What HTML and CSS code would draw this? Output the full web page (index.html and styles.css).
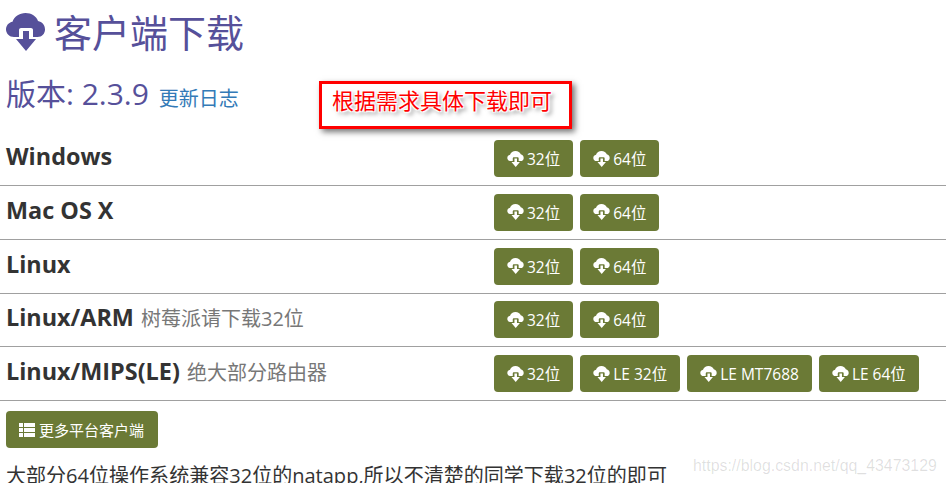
FILE: index.html
```html
<!DOCTYPE html>
<html lang="zh-CN">
<head>
  <meta charset="UTF-8">
  <title>客户端下载</title>
  <link rel="stylesheet" href="styles.css">
</head>
<body>
  <svg class="icon-defs" width="0" height="0">
    <symbol id="cloud-down" viewBox="0 0 39 38">
      <path d="M8 24C3.500 24 0 20.500 0 16.500C0 12.500 2.800 9.500 6.500 8.800C8 3.500 13.500 0 19.500 0C25.500 0 30.500 3.300 32 8C36 8.700 39 12 39 16.500C39 20.500 36 24 31.500 24H27V17C27 15.800 26 15 25 15H15C14 15 13 15.800 13 17V24Z"/>
      <path d="M17 18H23V26H30L20 38L10 26H17Z"/>
    </symbol>
  </svg>

  <h1 class="title"><svg class="title-icon"><use href="#cloud-down"/></svg> 客户端下载</h1>
  <h2 class="version">版本: 2.3.9 <a href="#" class="changelog">更新日志</a></h2>

  <!-- Platform rows -->
  <div class="platforms">
    <div class="row">
      <div class="name"><b>Windows</b></div>
      <div class="btns">
        <a href="#" class="btn"><svg class="btn-icon"><use href="#cloud-down"/></svg>32位</a>
        <a href="#" class="btn"><svg class="btn-icon"><use href="#cloud-down"/></svg>64位</a>
      </div>
    </div>
    <div class="row">
      <div class="name"><b>Mac OS X</b></div>
      <div class="btns">
        <a href="#" class="btn"><svg class="btn-icon"><use href="#cloud-down"/></svg>32位</a>
        <a href="#" class="btn"><svg class="btn-icon"><use href="#cloud-down"/></svg>64位</a>
      </div>
    </div>
    <div class="row">
      <div class="name"><b>Linux</b></div>
      <div class="btns">
        <a href="#" class="btn"><svg class="btn-icon"><use href="#cloud-down"/></svg>32位</a>
        <a href="#" class="btn"><svg class="btn-icon"><use href="#cloud-down"/></svg>64位</a>
      </div>
    </div>
    <div class="row">
      <div class="name"><b>Linux/ARM</b> <small>树莓派请下载32位</small></div>
      <div class="btns">
        <a href="#" class="btn"><svg class="btn-icon"><use href="#cloud-down"/></svg>32位</a>
        <a href="#" class="btn"><svg class="btn-icon"><use href="#cloud-down"/></svg>64位</a>
      </div>
    </div>
    <div class="row">
      <div class="name"><b>Linux/MIPS(LE)</b> <small>绝大部分路由器</small></div>
      <div class="btns">
        <a href="#" class="btn"><svg class="btn-icon"><use href="#cloud-down"/></svg>32位</a>
        <a href="#" class="btn"><svg class="btn-icon"><use href="#cloud-down"/></svg>LE 32位</a>
        <a href="#" class="btn"><svg class="btn-icon"><use href="#cloud-down"/></svg>LE MT7688</a>
        <a href="#" class="btn"><svg class="btn-icon"><use href="#cloud-down"/></svg>LE 64位</a>
      </div>
    </div>
  </div>

  <a href="#" class="btn btn-more">
    <svg class="list-icon" viewBox="0 0 16 14"><path d="M0 0H4V4H0ZM5 0H16V4H5ZM0 5H4V9H0ZM5 5H16V9H5ZM0 10H4V14H0ZM5 10H16V14H5Z"/></svg>更多平台客户端
  </a>
  <p class="note">大部分64位操作系统兼容32位的natapp,所以不清楚的同学下载32位的即可</p>

  <!-- Things pasted over the screenshot -->
  <div class="callout">根据需求具体下载即可</div>
  <div class="watermark">https://blog.csdn.net/qq_43473129</div>
</body>
</html>
```

FILE: styles.css
```css
html, body {
  height: 483px;
  overflow: hidden;
}

body {
  margin: 0;
  position: relative;
  background: #fff;
  color: #333;
  font-family: "Open Sans", "Noto Sans CJK SC", sans-serif;
}

.icon-defs {
  position: absolute;
}

/* Headings */
.title {
  display: flex;
  align-items: center;
  gap: 9px;
  height: 38px;
  margin: 13px 0 0 6px;
  font-size: 38px;
  font-weight: 400;
  line-height: 38px;
  color: #56509a;
}

.title-icon {
  width: 39px;
  height: 38px;
  fill: #56509a;
}

.version {
  height: 40px;
  margin: 23px 0 0 6px;
  font-size: 30px;
  font-weight: 400;
  line-height: 40px;
  color: #56509a;
}

.changelog {
  margin-left: 2px;
  font-size: 20px;
  font-weight: 400;
  color: #337ab7;
  text-decoration: none;
  vertical-align: -1px;
}

/* Platform table */
.platforms {
  margin-top: 18.200px;
}

.row {
  display: flex;
  align-items: center;
  box-sizing: border-box;
  height: 53.800px;
  padding: 4px 0 4px 6px;
  border-bottom: 1px solid #a0a0a0;
}

.name {
  width: 488px;
  padding-bottom: 5px;
  font-size: 23.400px;
  color: #333;
}

.name b {
  font-weight: 700;
}

.name small {
  margin-left: 1px;
  font-size: 20px;
  color: #777;
}

.btns {
  display: flex;
  gap: 7px;
}

.btn {
  display: inline-flex;
  align-items: center;
  height: 37px;
  padding: 0 13px;
  box-sizing: border-box;
  border-radius: 4px;
  background: #6b7a36;
  color: #fff;
  font-size: 15.500px;
  text-decoration: none;
}

.btn-icon {
  width: 17px;
  height: 16px;
  margin-right: 3px;
  fill: #fff;
}

.btn-more {
  margin: 10px 0 0 6px;
  padding-right: 14px;
  font-size: 15px;
}

.list-icon {
  width: 16px;
  height: 14px;
  margin-right: 4px;
  fill: #fff;
}

.note {
  margin: 14px 0 0 6px;
  font-size: 20.050px;
  line-height: 28px;
  color: #333;
}

/* Annotation box */
.callout {
  position: absolute;
  left: 319px;
  top: 81px;
  box-sizing: border-box;
  width: 253px;
  height: 48px;
  padding: 0 0 0 10px;
  border: 3px solid #f00;
  box-shadow: 3px 3px 6px rgba(0, 0, 0, 0.55);
  font-size: 22px;
  line-height: 32px;
  color: #f00;
  text-shadow: 1px 1px 1px #fff, -1px -1px 1px #fff, 1px -1px 1px #fff, -1px 1px 1px #fff, 0 0 4px #fff, 3px 3px 4px rgba(0, 0, 0, 0.5);
}

.watermark {
  position: absolute;
  left: 693px;
  top: 456px;
  font-family: "Liberation Sans", sans-serif;
  font-size: 15.900px;
  line-height: 20px;
  color: rgba(0, 0, 0, 0.13);
}
```
